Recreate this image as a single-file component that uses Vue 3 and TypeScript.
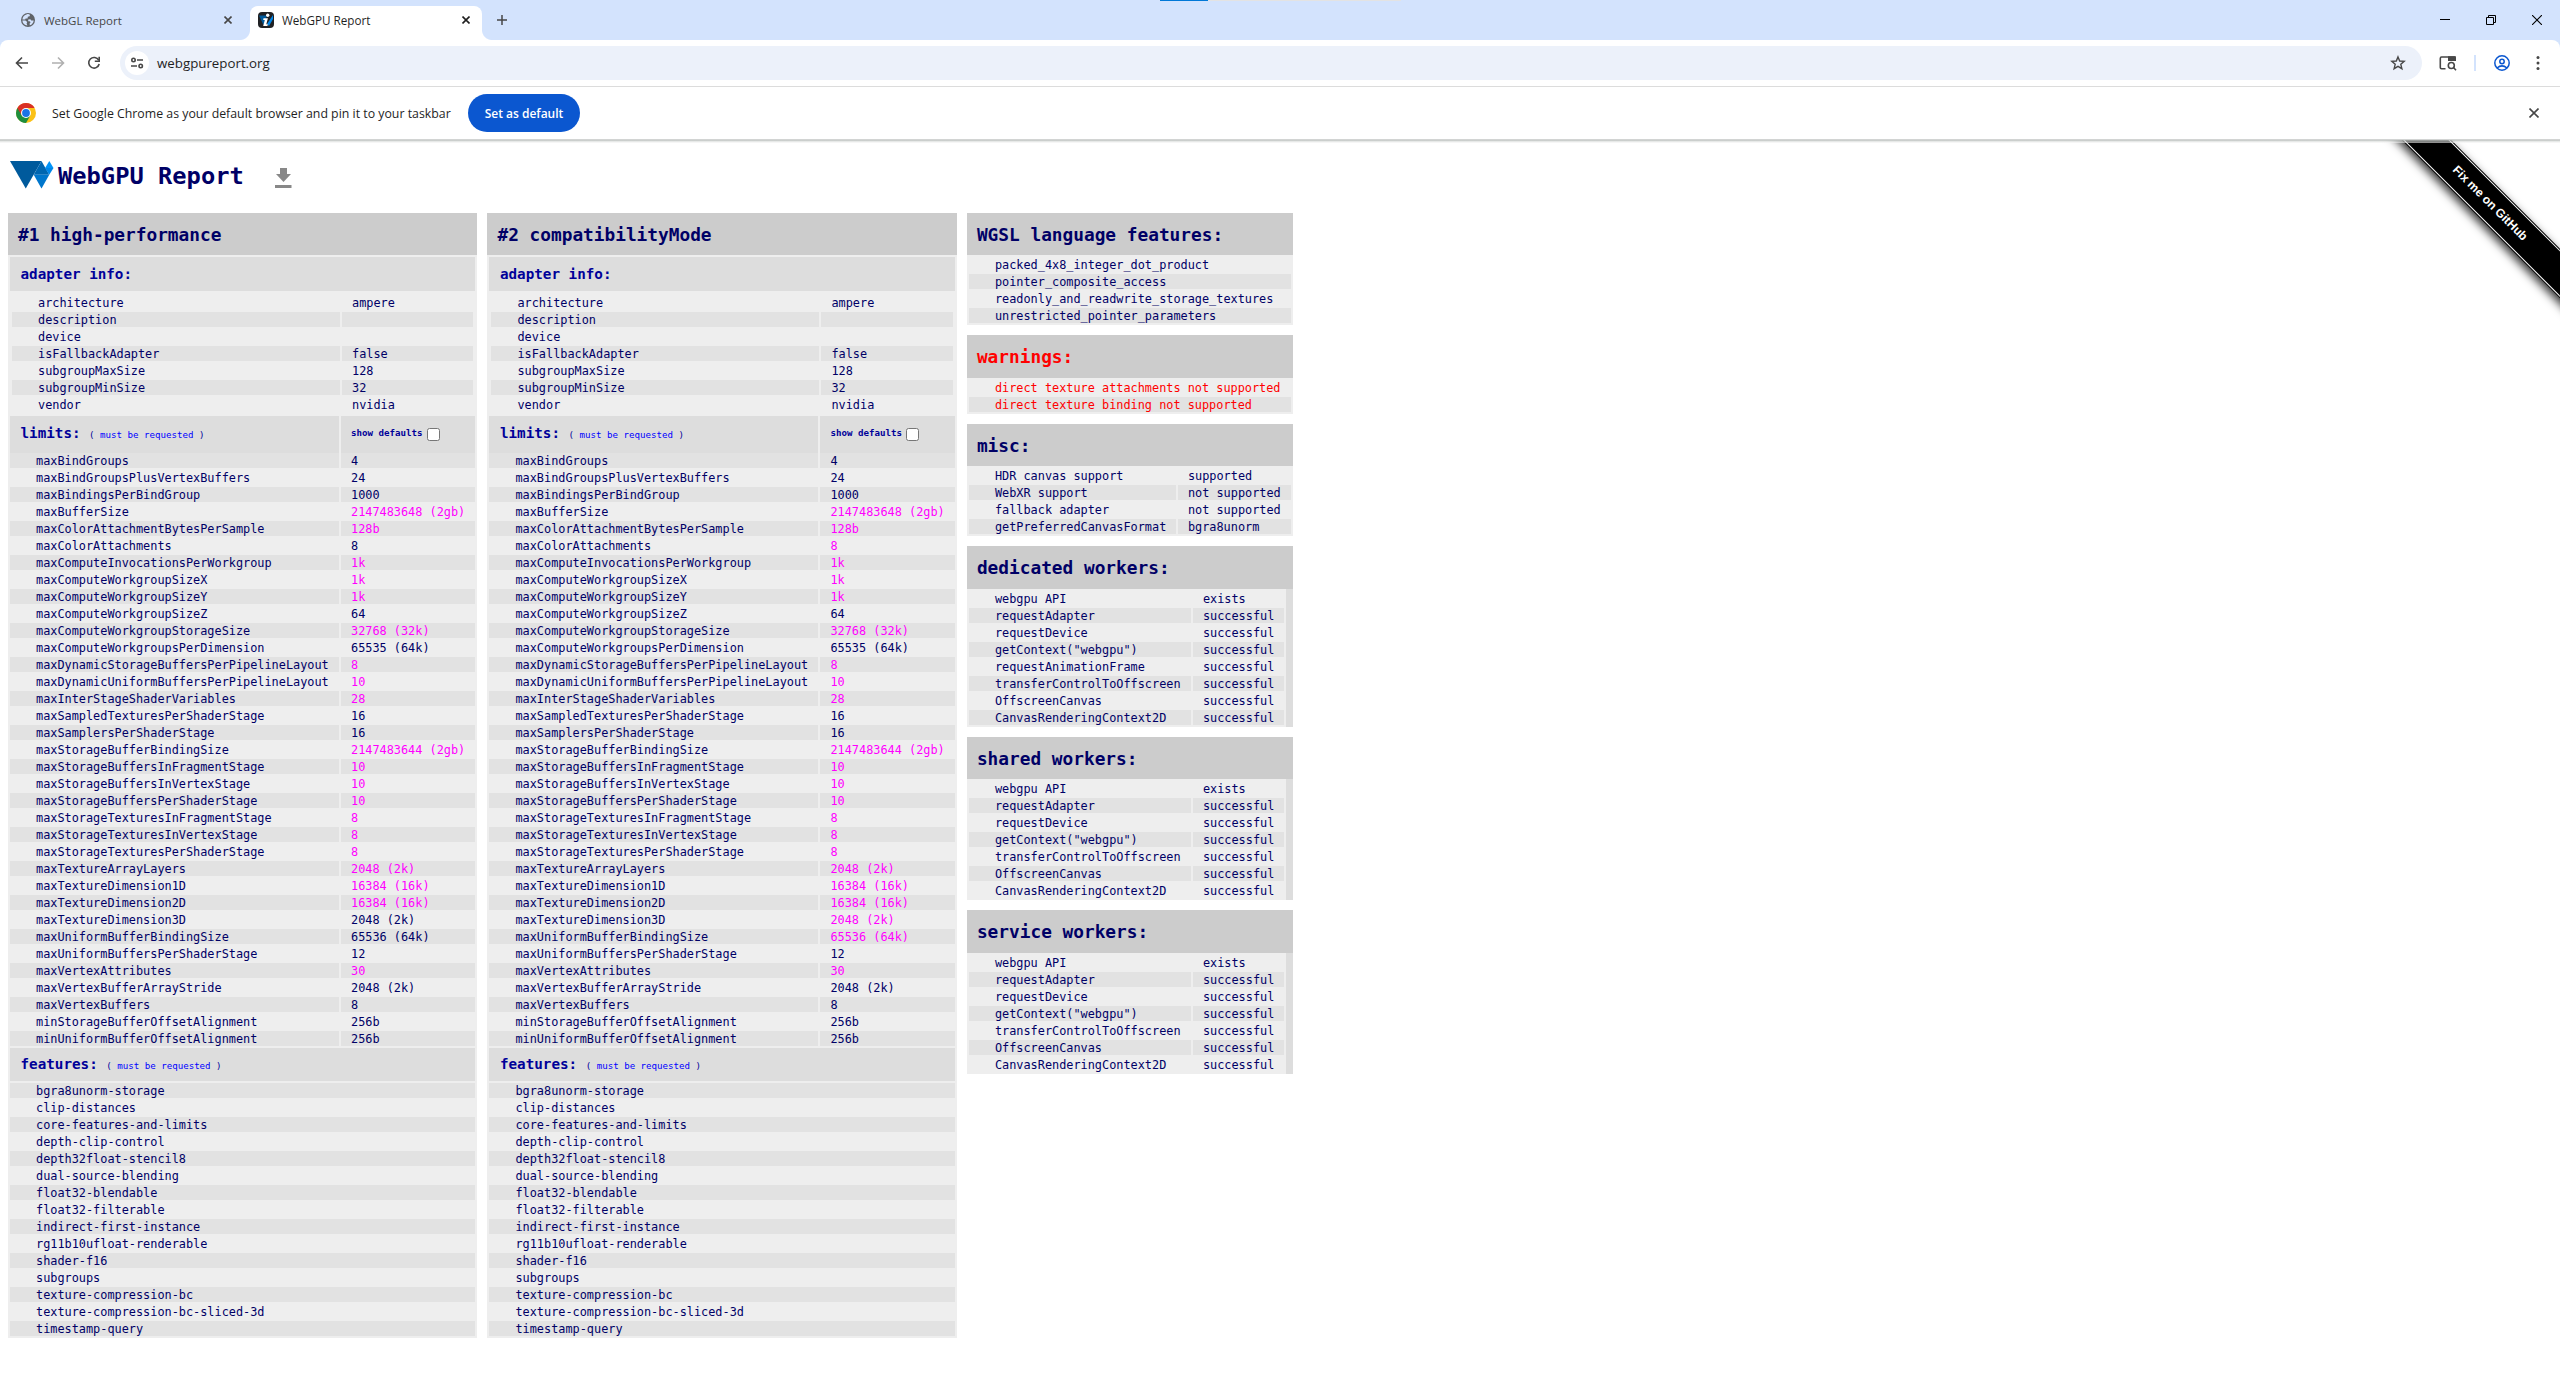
<script setup lang="ts">
interface Limit {
  name: string
  value: string
  /** Value exceeds the default limit on this adapter. */
  high: boolean
}

interface Adapter {
  title: string
  limits: Limit[]
}

interface SidePanel {
  title: string
  kind: 'list' | 'pairs' | 'worker'
  tall?: boolean
  warn?: boolean
  rows: string[][]
}

const info: [string, string][] = [
  ['architecture', 'ampere'],
  ['description', ''],
  ['device', ''],
  ['isFallbackAdapter', 'false'],
  ['subgroupMaxSize', '128'],
  ['subgroupMinSize', '32'],
  ['vendor', 'nvidia'],
]

const baseLimits: [string, string, boolean][] = [
  ['maxBindGroups', '4', false],
  ['maxBindGroupsPlusVertexBuffers', '24', false],
  ['maxBindingsPerBindGroup', '1000', false],
  ['maxBufferSize', '2147483648 (2gb)', true],
  ['maxColorAttachmentBytesPerSample', '128b', true],
  ['maxColorAttachments', '8', false],
  ['maxComputeInvocationsPerWorkgroup', '1k', true],
  ['maxComputeWorkgroupSizeX', '1k', true],
  ['maxComputeWorkgroupSizeY', '1k', true],
  ['maxComputeWorkgroupSizeZ', '64', false],
  ['maxComputeWorkgroupStorageSize', '32768 (32k)', true],
  ['maxComputeWorkgroupsPerDimension', '65535 (64k)', false],
  ['maxDynamicStorageBuffersPerPipelineLayout', '8', true],
  ['maxDynamicUniformBuffersPerPipelineLayout', '10', true],
  ['maxInterStageShaderVariables', '28', true],
  ['maxSampledTexturesPerShaderStage', '16', false],
  ['maxSamplersPerShaderStage', '16', false],
  ['maxStorageBufferBindingSize', '2147483644 (2gb)', true],
  ['maxStorageBuffersInFragmentStage', '10', true],
  ['maxStorageBuffersInVertexStage', '10', true],
  ['maxStorageBuffersPerShaderStage', '10', true],
  ['maxStorageTexturesInFragmentStage', '8', true],
  ['maxStorageTexturesInVertexStage', '8', true],
  ['maxStorageTexturesPerShaderStage', '8', true],
  ['maxTextureArrayLayers', '2048 (2k)', true],
  ['maxTextureDimension1D', '16384 (16k)', true],
  ['maxTextureDimension2D', '16384 (16k)', true],
  ['maxTextureDimension3D', '2048 (2k)', false],
  ['maxUniformBufferBindingSize', '65536 (64k)', false],
  ['maxUniformBuffersPerShaderStage', '12', false],
  ['maxVertexAttributes', '30', true],
  ['maxVertexBufferArrayStride', '2048 (2k)', false],
  ['maxVertexBuffers', '8', false],
  ['minStorageBufferOffsetAlignment', '256b', false],
  ['minUniformBufferOffsetAlignment', '256b', false],
]

// Compatibility mode has lower defaults, so more of its values stand out.
const compatHigh = new Set(['maxColorAttachments', 'maxTextureDimension3D', 'maxUniformBufferBindingSize'])

const adapters: Adapter[] = [
  {
    title: '#1 high-performance',
    limits: baseLimits.map(([name, value, high]) => ({ name, value, high })),
  },
  {
    title: '#2 compatibilityMode',
    limits: baseLimits.map(([name, value, high]) => ({ name, value, high: high || compatHigh.has(name) })),
  },
]

const features: string[] = [
  'bgra8unorm-storage',
  'clip-distances',
  'core-features-and-limits',
  'depth-clip-control',
  'depth32float-stencil8',
  'dual-source-blending',
  'float32-blendable',
  'float32-filterable',
  'indirect-first-instance',
  'rg11b10ufloat-renderable',
  'shader-f16',
  'subgroups',
  'texture-compression-bc',
  'texture-compression-bc-sliced-3d',
  'timestamp-query',
]

const workerRows = (withRaf: boolean): string[][] => [
  ['webgpu API', 'exists'],
  ['requestAdapter', 'successful'],
  ['requestDevice', 'successful'],
  ['getContext("webgpu")', 'successful'],
  ...(withRaf ? [['requestAnimationFrame', 'successful']] : []),
  ['transferControlToOffscreen', 'successful'],
  ['OffscreenCanvas', 'successful'],
  ['CanvasRenderingContext2D', 'successful'],
]

const sidePanels: SidePanel[] = [
  {
    title: 'WGSL language features:',
    kind: 'list',
    rows: [
      ['packed_4x8_integer_dot_product'],
      ['pointer_composite_access'],
      ['readonly_and_readwrite_storage_textures'],
      ['unrestricted_pointer_parameters'],
    ],
  },
  {
    title: 'warnings:',
    kind: 'list',
    tall: true,
    warn: true,
    rows: [['direct texture attachments not supported'], ['direct texture binding not supported']],
  },
  {
    title: 'misc:',
    kind: 'pairs',
    rows: [
      ['HDR canvas support', 'supported'],
      ['WebXR support', 'not supported'],
      ['fallback adapter', 'not supported'],
      ['getPreferredCanvasFormat', 'bgra8unorm'],
    ],
  },
  { title: 'dedicated workers:', kind: 'worker', tall: true, rows: workerRows(true) },
  { title: 'shared workers:', kind: 'worker', rows: workerRows(false) },
  { title: 'service workers:', kind: 'worker', tall: true, rows: workerRows(false) },
]
</script>

<template>
  <div class="window">
    <div class="accent"><i></i></div>
    <header class="tabs">
      <div class="tab">
        <svg class="fav" width="16" height="16" viewBox="0 0 16 16">
          <circle cx="8" cy="8" r="7" fill="#5f6368" />
          <path d="M7 2.200C9.500 1.800 10.600 3 9.600 4.200L7.800 4.800L7.600 6.600H5.600L5.200 7.600L2.400 7.400C2.500 5 4.500 2.600 7 2.200ZM2.300 8.600L5.400 8.600L7.200 10L6.600 11.400L7.400 13.600C4.500 13.500 2.600 11.300 2.300 8.600ZM8.200 7.400L10.400 7.200L11.200 8.400H13.700C13.400 10.800 12 12.600 9.800 13.300L9.600 11.400L10.600 10.200L9.600 9.200H8.200Z" fill="#d3e3fd" />
        </svg>
        <span class="label one">WebGL Report</span>
        <svg class="x" width="8" height="8" viewBox="0 0 8 8"><path d="M.5 .5L7.500 7.500M7.500 .5L.5 7.500" stroke="#474747" stroke-width="1.600" /></svg>
      </div>
      <div class="tab active">
        <svg class="fav" width="16" height="16" viewBox="0 0 16 16">
          <rect width="16" height="16" rx="4" fill="#202124" />
          <path d="M1 3.500H9L5.500 13Z" fill="#005a9c" />
          <path d="M9 12L15 3V7L11 14Z" fill="#0086e8" />
          <circle cx="9.700" cy="3.300" r="1.700" fill="#fff" />
          <path d="M5.500 6.300H9.900L8.300 12.200H9.900L9.400 14H5.200L6.800 8H5.200Z" fill="#fff" />
        </svg>
        <span class="label two">WebGPU Report</span>
        <svg class="x" width="8" height="8" viewBox="0 0 8 8"><path d="M.5 .5L7.500 7.500M7.500 .5L.5 7.500" stroke="#1f1f1f" stroke-width="1.600" /></svg>
      </div>
      <svg class="plus" width="10" height="10" viewBox="0 0 10 10"><path d="M5 0V10M0 5H10" stroke="#474747" stroke-width="1.500" /></svg>
      <div class="controls">
        <svg width="10" height="10" viewBox="0 0 10 10"><path d="M0 4.500H10" stroke="#000" /></svg>
        <svg width="10" height="10" viewBox="0 0 10 10"><path d="M.5 2.500H7.500V9.500H.5ZM2.500 2.500V.5H9.500V7.500H7.500" fill="none" stroke="#000" /></svg>
        <svg width="10" height="10" viewBox="0 0 10 10"><path d="M0 0L10 10M10 0L0 10" stroke="#000" stroke-width="1.100" /></svg>
      </div>
    </header>

    <div class="toolbar-wrap">
      <div class="toolbar">
        <svg class="nav" width="16" height="16" viewBox="0 0 16 16"><path d="M14 8H3M8 2.500L2.500 8L8 13.500" fill="none" stroke="#474747" stroke-width="1.600" /></svg>
        <svg class="nav" width="16" height="16" viewBox="0 0 16 16"><path d="M2 8H13M8 2.500L13.500 8L8 13.500" fill="none" stroke="#b0b0b0" stroke-width="1.600" /></svg>
        <svg class="nav" width="16" height="16" viewBox="0 0 16 16"><path d="M12.700 5.200A5.300 5.300 0 1 0 13.200 9" fill="none" stroke="#474747" stroke-width="1.600" /><path d="M13.200 1.800V6.200H8.800" fill="none" stroke="#474747" stroke-width="1.600" /></svg>
        <div class="omnibox">
          <span class="site">
            <svg width="14" height="14" viewBox="0 0 14 14" fill="none" stroke="#474747" stroke-width="1.600"><circle cx="3.500" cy="4" r="1.700" /><path d="M7 4H13M1 10H7" /><circle cx="10.700" cy="10" r="1.700" /></svg>
          </span>
          <span class="url">webgpureport.org</span>
          <svg class="star" width="16" height="16" viewBox="0 0 16 16"><path d="M8 1.900L9.700 6L14.200 6.400L10.800 9.300L11.900 13.700L8 11.400L4.100 13.700L5.200 9.300L1.800 6.400L6.300 6Z" fill="none" stroke="#474747" stroke-width="1.400" /></svg>
        </div>
        <svg class="lens" width="18" height="16" viewBox="0 0 18 16"><path d="M6.500 13.700H2.500Q1.300 13.700 1.300 12.500V3.500Q1.300 2 2.500 2H16V4.500" fill="none" stroke="#474747" stroke-width="1.600" /><path d="M9 1.200H15.500Q17 1.200 17 2.700V6H9Z" fill="#474747" /><circle cx="12.300" cy="10.500" r="3" fill="none" stroke="#474747" stroke-width="1.600" /><path d="M14.500 12.500L17 15.200" stroke="#474747" stroke-width="1.600" /></svg>
        <i class="divider"></i>
        <svg class="profile" width="16" height="16" viewBox="0 0 16 16" fill="none" stroke="#0b57d0" stroke-width="1.500"><circle cx="8" cy="8" r="7.200" /><circle cx="8" cy="6.500" r="2.200" /><path d="M3 13Q8 8.800 13 13" /></svg>
        <svg class="dots" width="4" height="16" viewBox="0 0 4 16" fill="#474747"><circle cx="2" cy="2.500" r="1.500" /><circle cx="2" cy="8" r="1.500" /><circle cx="2" cy="13.500" r="1.500" /></svg>
      </div>
    </div>

    <div class="infobar">
      <svg class="chrome" width="20" height="20" viewBox="0 0 20 20">
        <circle cx="10" cy="10" r="10" fill="#fbc116" />
        <path d="M10 10L1.340 5A10 10 0 0 0 10 20L14.330 12.500Z" fill="#1e8e3e" />
        <path d="M10 5H18.660A10 10 0 0 0 1.340 5L5.670 12.500L10 10Z" fill="#d93025" />
        <circle cx="10" cy="10" r="5" fill="#fff" />
        <circle cx="10" cy="10" r="3.900" fill="#1a73e8" />
      </svg>
      <span class="message">Set Google Chrome as your default browser and pin it to your taskbar</span>
      <button class="default-btn" type="button"><span>Set as default</span></button>
      <svg class="close" width="10" height="10" viewBox="0 0 10 10"><path d="M.5 .5L9.500 9.500M9.500 .5L.5 9.500" stroke="#474747" stroke-width="1.600" /></svg>
    </div>

    <main class="page">
      <div class="edge"></div>
      <div class="ribbon-box"><a class="ribbon">Fix me on GitHub</a></div>

      <h1>
        <svg class="logo" width="44" height="28" viewBox="0 0 44 28">
          <path d="M0 0H31.500L15.750 27.500Z" fill="#005a9c" />
          <path d="M31.500 0L39.300 13.700H23.700Z" fill="#0066b0" />
          <path d="M23.700 13.700H39.300L31.500 27.500Z" fill="#0076cc" />
          <path d="M39.300 0L43.500 7H35.100Z" fill="#0093f8" />
          <path d="M35.100 7H43.500L39.300 13.700Z" fill="#0086e8" />
        </svg>
        <span>WebGPU Report</span>
        <svg class="download" width="17" height="20" viewBox="0 0 17 20"><path d="M5 0H12V6H16L8.500 14L1 6H5ZM0 17H16.500V20H0Z" fill="#888" /></svg>
      </h1>

      <div class="columns">
        <section v-for="a in adapters" :key="a.title" class="adapter">
          <h2>{{ a.title }}</h2>
          <div class="body">
            <div class="head info-head"><b>adapter info:</b></div>
            <div class="info">
              <div v-for="r in info" :key="r[0]" class="row">
                <span>{{ r[0] }}</span><span>{{ r[1] }}</span>
              </div>
            </div>
            <div class="limits-head">
              <div class="head"><b>limits:</b><small>( <em>must be requested</em> )</small></div>
              <div class="head defaults"><label>show defaults</label><i class="check"></i></div>
            </div>
            <div v-for="l in a.limits" :key="l.name" class="row limit">
              <span>{{ l.name }}</span><span :class="{ high: l.high }">{{ l.value }}</span>
            </div>
            <div class="head features-head"><b>features:</b><small>( <em>must be requested</em> )</small></div>
            <div v-for="(f, i) in features" :key="f" class="feature" :class="{ shade: i % 2 === 0 }">{{ f }}</div>
          </div>
        </section>

        <aside class="side">
          <section v-for="p in sidePanels" :key="p.title" :class="['panel', p.kind, { tall: p.tall, warn: p.warn }]">
            <h2>{{ p.title }}</h2>
            <div class="list-body">
              <div v-for="r in p.rows" :key="r[0]" class="row">
                <span v-for="(c, i) in r" :key="i">{{ c }}</span>
              </div>
            </div>
          </section>
        </aside>
      </div>
    </main>
  </div>
</template>

<style>
body {
  margin: 0;
  background: #fff;
  overflow: hidden;
}
</style>

<style scoped>
.window {
  position: relative;
  width: 2560px;
  height: 1399px;
  overflow: hidden;
  background: #fff;
  font-family: "Open Sans", "Noto Sans", sans-serif;
  color: #1f1f1f;
}
svg {
  display: block;
  flex: none;
}
.accent {
  position: absolute;
  left: 1160px;
  top: 0;
  width: 241px;
  height: 1px;
  background: #e3e3e3;
}
.accent i {
  display: block;
  width: 48px;
  height: 1px;
  background: #0078d7;
}
.tabs {
  display: flex;
  height: 40px;
  background: #d3e3fd;
}
.tab {
  position: relative;
  box-sizing: border-box;
  display: flex;
  align-items: center;
  width: 232px;
  height: 34px;
  margin-top: 6px;
  padding: 0 12px 6px 8px;
  font-size: 11.5px;
}
.tabs .tab:nth-child(1) {
  margin-left: 12px;
  margin-right: 6px;
}
.tab.active {
  background: #fff;
  border-radius: 8px 8px 0 0;
}
.tab.active::before,
.tab.active::after {
  content: "";
  position: absolute;
  bottom: 0;
  width: 10px;
  height: 10px;
}
.tab.active::before {
  left: -10px;
  background: radial-gradient(circle at 0 0, #d3e3fd 9.5px, #fff 10.5px);
}
.tab.active::after {
  right: -10px;
  background: radial-gradient(circle at 10px 0, #d3e3fd 9.5px, #fff 10.5px);
}
.label {
  margin: 0 auto 0 8px;
  color: #474747;
  white-space: nowrap;
}
.two {
  font-size: 11.700px;
  color: #1f1f1f;
}
.plus {
  margin: 15px 0 0 15px;
}
.controls {
  display: flex;
  gap: 36px;
  margin: 15px 18px 0 auto;
}
.toolbar-wrap {
  background: #d3e3fd;
}
.toolbar {
  box-sizing: border-box;
  display: flex;
  align-items: center;
  height: 47px;
  padding: 0 20px 1px 14px;
  background: #fff;
  border-bottom: 1px solid #dcdcdc;
  border-radius: 8px 8px 0 0;
}
.nav {
  margin-right: 20px;
}
.omnibox {
  display: flex;
  flex: 1;
  align-items: center;
  height: 34px;
  margin-left: -2px;
  border-radius: 17px;
  background: #ecf1fa;
}
.site {
  display: flex;
  align-items: center;
  justify-content: center;
  width: 24px;
  height: 24px;
  margin: 0 8px 0 5px;
  border-radius: 50%;
  background: #fff;
}
.url {
  font-size: 13.300px;
}
.star {
  margin: 0 16px 0 auto;
}
.lens {
  margin-left: 17px;
}
.divider {
  width: 2px;
  height: 16px;
  margin: 0 18px 0 17px;
  background: #d3e3fd;
}
.dots {
  margin: 0 0 0 26px;
}
.infobar {
  display: flex;
  align-items: center;
  height: 52px;
  padding: 0 21px 0 16px;
  font-size: 12.340px;
}
.message {
  width: 416px;
  margin-left: 16px;
  white-space: nowrap;
}
.default-btn {
  display: flex;
  align-items: center;
  justify-content: center;
  width: 112px;
  height: 38px;
  padding: 0;
  border: 0;
  border-radius: 19px;
  background: #0b57d0;
  color: #fff;
  font: 600 12px "Open Sans", sans-serif;
  white-space: nowrap;
}
.close {
  margin-left: auto;
}
.page {
  position: relative;
  height: 1260px;
  font-family: "DejaVu Sans Mono", monospace;
  font-size: 11.870px;
  color: #006;
}
.edge {
  position: absolute;
  z-index: 2;
  inset: 0 0 auto;
  height: 4px;
  background: linear-gradient(#d2d4d3 0 1px, rgba(190, 194, 192, 0.8) 1px 2px, rgba(215, 218, 216, 0.6) 2px 3px, rgba(240, 240, 240, 0.6) 3px);
}
.ribbon-box {
  position: absolute;
  top: 0;
  right: 0;
  width: 220px;
  height: 220px;
  overflow: hidden;
}
.ribbon {
  position: absolute;
  left: -50px;
  top: 47px;
  width: 400px;
  height: 34.800px;
  transform: rotate(45deg);
  background: #000;
  box-shadow: 4px 4px 10px rgba(0, 0, 0, 0.8);
  color: #fff;
  font: bold 12.100px/35px "Liberation Sans", Arial, sans-serif;
  text-align: center;
}
.ribbon::before,
.ribbon::after {
  content: "";
  position: absolute;
  left: 0;
  right: 0;
  height: 1px;
  background: #fff;
}
.ribbon::before {
  top: 1px;
}
.ribbon::after {
  bottom: 1px;
}
h1 {
  display: flex;
  align-items: flex-start;
  height: 52px;
  margin: 0;
  padding: 22px 0 0 9.500px;
  font-size: 23.740px;
  line-height: 30px;
}
h1 span {
  margin-left: 4.500px;
}
.download {
  margin: 7px 0 0 31.500px;
}
.columns {
  display: flex;
  align-items: flex-start;
  gap: 10px;
  padding-left: 8px;
}
.adapter {
  width: 469.460px;
}
h2 {
  height: 42px;
  margin: 0;
  padding-left: 10px;
  background: #ccc;
  font-size: 17.800px;
  line-height: 43px;
  white-space: pre;
}
.body {
  display: flex;
  flex-direction: column;
  gap: 2px;
  padding: 2px;
  background: #eee;
}
.head {
  display: flex;
  align-items: baseline;
  background: #ddd;
  color: #009;
}
.head b {
  margin-left: 10.500px;
  font-size: 14.250px;
}
.info-head {
  height: 34px;
  line-height: 35px;
}
.features-head {
  height: 33px;
  line-height: 33px;
}
.head small {
  margin-left: 8.500px;
  font-size: 9.130px;
  white-space: pre;
}
.head em {
  font-style: normal;
  color: #00f;
}
.info {
  display: flex;
  flex-direction: column;
  gap: 2px;
  padding: 2px;
}
.row {
  display: grid;
  grid-template-columns: 328px 1fr;
  gap: 2px;
  height: 15px;
  line-height: 17px;
  white-space: pre;
}
.row span {
  height: 15px;
}
.row span:first-child {
  padding-left: 26px;
}
.row span:nth-child(2) {
  padding-left: 10px;
}
.info .row:nth-child(even) span,
.list-body .row:nth-child(even) span,
.limit:nth-child(even) span {
  background: #e2e2e2;
}
.limits-head,
.limit {
  display: grid;
  grid-template-columns: 329px 1fr;
  gap: 2px;
}
.limits-head {
  height: 35px;
  line-height: 35px;
}
.defaults {
  align-items: center;
  font-size: 9.130px;
  font-weight: bold;
}
.defaults label {
  margin: -2px 0 0 10px;
}
.check {
  box-sizing: border-box;
  width: 13px;
  height: 13px;
  margin-left: 4.500px;
  border: 1px solid #767676;
  border-radius: 2.500px;
  background: #fff;
}
.limit span:nth-child(2) {
  padding-left: 10px;
}
.limit .high {
  color: #f0f;
}
.feature {
  height: 15px;
  padding-left: 26px;
  line-height: 17px;
}
.feature.shade {
  background: #e2e2e2;
}
.side {
  display: flex;
  flex-direction: column;
  gap: 10px;
  width: 326px;
}
.tall h2 {
  height: 43px;
  line-height: 44px;
}
.list-body {
  display: flex;
  flex-direction: column;
  gap: 2px;
  padding: 2px;
  background: #eee;
}
.list .row {
  grid-template-columns: 1fr;
}
.pairs .row {
  grid-template-columns: 207px 1fr;
}
.worker {
  background: #ddd;
}
.worker .list-body {
  width: 315px;
}
.worker .row {
  grid-template-columns: 222px 1fr;
}
.warn,
.warn h2 {
  color: red;
}
</style>
